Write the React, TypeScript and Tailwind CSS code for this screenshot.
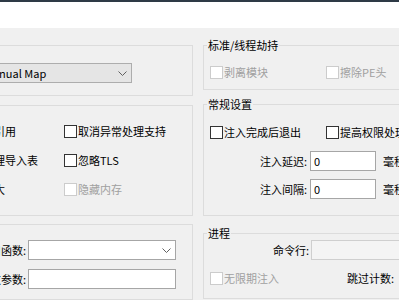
import React from 'react';

function CheckBox({ label, disabled }: { label: string; disabled?: boolean }) {
  return (
    <label className="flex items-center h-[20px] whitespace-nowrap">
      <span
        className={`w-[13px] h-[13px] border bg-white shrink-0 ${
          disabled ? 'border-[#cccccc]' : 'border-[#333333]'
        }`}
      />
      <span className={`ml-[1px] ${disabled ? 'text-[#a0a0a0]' : 'text-black'}`}>{label}</span>
    </label>
  );
}

function Chevron() {
  return (
    <svg width="9" height="5" viewBox="0 0 9 5" className="shrink-0">
      <path d="M0.5 0.5 L4.5 4.5 L8.5 0.5" fill="none" stroke="#606060" strokeWidth="1" />
    </svg>
  );
}

function Group({
  title,
  className = '',
  children,
}: {
  title: string;
  className?: string;
  children: React.ReactNode;
}) {
  return (
    <fieldset className={`border border-[#dcdcdc] min-w-0 ${className}`}>
      <legend className="ml-[3px] px-[1px] leading-[14px] text-black whitespace-nowrap">{title}</legend>
      {children}
    </fieldset>
  );
}

export default function App() {
  return (
    <div className="w-[399px] h-[300px] overflow-hidden bg-[#f0f0f0] text-[11px] text-black font-['Microsoft_YaHei','Noto_Sans_CJK_SC',sans-serif]">
      <div className="h-[2px] bg-[#2e3a46]" />
      <div className="h-[26px] bg-white" />

      <div className="flex gap-[10px] -ml-[50px] pt-[10px]">
        {/* left column */}
        <div className="w-[243px] shrink-0 flex flex-col">
          <Group title="注入方式">
            <div className="pt-[11px] pb-[12px] pl-[27px]">
              <div className="w-[154px] h-[20px] bg-[#e5e5e5] border border-[#adadad] flex items-center justify-between pl-[5px] pr-[4px]">
                <span className="whitespace-nowrap">Manual Map</span>
                <Chevron />
              </div>
            </div>
          </Group>

          <Group title="高级选项" className="mt-[2px]">
            <div className="pt-[5px] pb-[11px] pl-[7px]">
              <div className="flex items-center h-[29px]">
                <div className="w-[106px] shrink-0">
                  <CheckBox label="删除引用" />
                </div>
                <CheckBox label="取消异常处理支持" />
              </div>
              <div className="flex items-center h-[29px]">
                <div className="w-[106px] shrink-0">
                  <CheckBox label="不处理导入表" />
                </div>
                <CheckBox label="忽略TLS" />
              </div>
              <div className="flex items-center h-[29px]">
                <div className="w-[106px] shrink-0">
                  <CheckBox label="内存大" />
                </div>
                <CheckBox label="隐藏内存" disabled />
              </div>
            </div>
          </Group>

          <Group title="函数调用" className="mt-[1px]">
            <div className="pt-[9px] pb-[10px] pl-[7px] flex flex-col gap-[9px]">
              <div className="flex items-center h-[20px]">
                <span className="w-[68px] shrink-0 text-right whitespace-nowrap">入口函数:</span>
                <div className="ml-[2px] w-[148px] shrink-0 h-[20px] bg-white border border-[#a6a6a6] flex items-center justify-end pr-[4px]">
                  <Chevron />
                </div>
              </div>
              <div className="flex items-center h-[20px]">
                <span className="w-[68px] shrink-0 text-right whitespace-nowrap">函数参数:</span>
                <div className="ml-[2px] w-[148px] shrink-0 h-[20px] bg-white border border-[#a6a6a6]" />
              </div>
            </div>
          </Group>
        </div>

        {/* right column */}
        <div className="w-[284px] shrink-0 flex flex-col">
          <Group title="标准/线程劫持">
            <div className="pt-[10px] pb-[7px] pl-[6px] flex">
              <div className="w-[116px] shrink-0">
                <CheckBox label="剥离模块" disabled />
              </div>
              <CheckBox label="擦除PE头" disabled />
            </div>
          </Group>

          <Group title="常规设置" className="mt-[7px]">
            <div className="pt-[11px] pb-[16px] pl-[6px]">
              <div className="flex">
                <div className="w-[116px] shrink-0">
                  <CheckBox label="注入完成后退出" />
                </div>
                <CheckBox label="提高权限处理" />
              </div>
              <div className="flex items-center h-[20px] mt-[9px]">
                <span className="w-[97px] shrink-0 text-right whitespace-nowrap">注入延迟:</span>
                <div className="ml-[3px] w-[66px] shrink-0 h-[20px] bg-white border border-[#a6a6a6] flex items-center pl-[3px]">
                  0
                </div>
                <span className="ml-[7px] whitespace-nowrap">毫秒</span>
              </div>
              <div className="flex items-center h-[20px] mt-[8px]">
                <span className="w-[97px] shrink-0 text-right whitespace-nowrap">注入间隔:</span>
                <div className="ml-[3px] w-[66px] shrink-0 h-[20px] bg-white border border-[#a6a6a6] flex items-center pl-[3px]">
                  0
                </div>
                <span className="ml-[7px] whitespace-nowrap">毫秒</span>
              </div>
            </div>
          </Group>

          <Group title="进程" className="mt-[10px]">
            <div className="pl-[6px] pb-[10px]">
              <div className="flex items-center h-[20px]">
                <span className="w-[99px] shrink-0 text-right whitespace-nowrap">命令行:</span>
                <div className="ml-[2px] w-[160px] shrink-0 h-[20px] bg-[#f4f4f4] border border-[#cfcfcf]" />
              </div>
              <div className="flex items-center mt-[8px]">
                <div className="w-[137px] shrink-0">
                  <CheckBox label="无限期注入" disabled />
                </div>
                <span className="whitespace-nowrap">跳过计数:</span>
              </div>
            </div>
          </Group>
        </div>
      </div>
    </div>
  );
}
